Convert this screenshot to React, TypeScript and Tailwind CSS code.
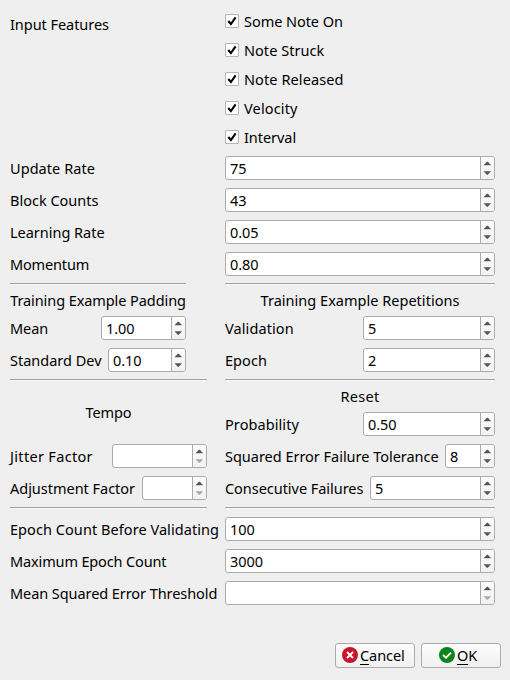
import React from 'react';

type LabelProps = { text: string; tracking?: string };

function Label({ text, tracking = '' }: LabelProps) {
  return <span className={`whitespace-pre ${tracking}`}>{text}</span>;
}

function CheckRow({ text, tracking }: LabelProps) {
  return (
    <label className="flex h-7 items-center gap-[5px]">
      <span className="flex size-[14px] shrink-0 items-center justify-center rounded-[1px] border border-[#b6b6b6] bg-white">
        <svg width="12" height="12" viewBox="0 0 12 12" fill="none" stroke="#000" strokeWidth="2.1">
          <path d="M2.3 6 L4.9 9.1 L9.6 2.4" />
        </svg>
      </span>
      <Label text={text} tracking={tracking} />
    </label>
  );
}

function SpinBox({ value = '', width = 'w-[270px]', atMinimum = false }: { value?: string; width?: string; atMinimum?: boolean }) {
  return (
    <span className={`flex h-6 shrink-0 rounded-[3px] border border-[#ababab] bg-white ${width}`}>
      <span className="flex flex-1 items-center pl-1 tracking-[-0.05px]">{value}</span>
      <span className="flex w-[14px] items-center justify-center rounded-r-[2px] border-l border-[#ababab] bg-linear-to-b from-[#fcfcfc] to-[#f1f1f1]">
        <svg width="13" height="22" viewBox="0 0 13 22">
          <path d="M2.5 8.3 L5.8 4.8 L6.8 4.8 L10.1 8.3 Z" fill="#555" />
          <path d="M2.5 14.2 L5.8 17.7 L6.8 17.7 L10.1 14.2 Z" fill={atMinimum ? '#a8a8a8' : '#555'} />
        </svg>
      </span>
    </span>
  );
}

function Field({ text, tracking, value, width, atMinimum }: LabelProps & { value?: string; width: string; atMinimum?: boolean }) {
  return (
    <div className="flex h-6 items-center justify-between">
      <Label text={text} tracking={tracking} />
      <SpinBox value={value} width={width} atMinimum={atMinimum} />
    </div>
  );
}

function WideField({ text, tracking, value, atMinimum }: LabelProps & { value?: string; atMinimum?: boolean }) {
  return (
    <div className="flex h-6 items-center">
      <div className="flex w-[215px] shrink-0">
        <Label text={text} tracking={tracking} />
      </div>
      <SpinBox value={value} atMinimum={atMinimum} />
    </div>
  );
}

function Separator() {
  return <div className="h-[2px] border-t border-b border-t-[#9f9f9f] border-b-[#f9f9f9]" />;
}

export default function App() {
  return (
    <div className="flex h-[680px] w-[510px] flex-col bg-[#efefef] pr-[15px] pl-[10px] font-['Noto_Sans',sans-serif] text-[14.5px] leading-5 text-black">
      <div className="flex pt-[7px]">
        <div className="w-[215px] pt-[7px]">
          <Label text="Input Features" tracking="tracking-[-0.05px]" />
        </div>
        <div className="flex flex-col gap-px">
          <CheckRow text="Some Note On" tracking="tracking-[-0.05px]" />
          <CheckRow text="Note Struck" tracking="tracking-[0.04px]" />
          <CheckRow text="Note Released" tracking="tracking-[0.1px]" />
          <CheckRow text="Velocity" tracking="tracking-[0.15px]" />
          <CheckRow text="Interval" tracking="tracking-[-0.05px]" />
        </div>
      </div>

      <div className="mt-[5px] flex flex-col gap-2">
        <WideField text="Update Rate" tracking="tracking-[0.06px]" value="75" />
        <WideField text="Block Counts" tracking="tracking-[0px]" value="43" />
        <WideField text="Learning Rate" tracking="tracking-[-0.02px]" value="0.05" />
        <WideField text="Momentum" tracking="tracking-[-0.15px]" value="0.80" />
      </div>

      <div className="mt-[7px] flex h-[89px]">
        <div className="mr-[39px] w-[176px]">
          <Separator />
          <div className="mt-[5px] text-center">
            <Label text="Training Example Padding" tracking="tracking-[-0.08px]" />
          </div>
          <div className="mt-[6px] flex flex-col gap-2">
            <Field text="Mean" tracking="tracking-[-0.1px]" value="1.00" width="w-[85px]" />
            <Field text="Standard Dev" tracking="tracking-[0px]" value="0.10" width="w-[78px]" />
          </div>
        </div>
        <div className="w-[270px]">
          <Separator />
          <div className="mt-[5px] text-center">
            <Label text="Training Example Repetitions" tracking="tracking-[0.02px]" />
          </div>
          <div className="mt-[6px] flex flex-col gap-2">
            <Field text="Validation" tracking="tracking-[0.1px]" value="5" width="w-[132px]" />
            <Field text="Epoch" tracking="tracking-[0.05px]" value="2" width="w-[132px]" />
          </div>
        </div>
      </div>

      <div className="mt-[7px] flex h-[128px]">
        <div className="mr-[18px] w-[197px]">
          <Separator />
          <div className="flex h-[63px] items-center justify-center pb-[2px]">
            <Label text="Tempo" tracking="tracking-[-0.1px]" />
          </div>
          <div className="flex flex-col gap-2">
            <Field text="Jitter Factor" tracking="tracking-[0.32px]" width="w-[95px]" atMinimum />
            <Field text="Adjustment Factor" tracking="tracking-[-0.02px]" width="w-[65px]" atMinimum />
          </div>
          <div className="mt-[7px]">
            <Separator />
          </div>
        </div>
        <div className="w-[270px]">
          <Separator />
          <div className="mt-[5px] text-center">
            <Label text="Reset" tracking="tracking-[0.3px]" />
          </div>
          <div className="mt-[6px] flex flex-col gap-2">
            <Field text="Probability" tracking="tracking-[0.08px]" value="0.50" width="w-[132px]" />
            <Field text="Squared Error Failure Tolerance" tracking="tracking-[-0.02px]" value="8" width="w-[50px]" />
            <Field text="Consecutive Failures" tracking="tracking-[-0.04px]" value="5" width="w-[125px]" />
          </div>
          <div className="mt-[7px]">
            <Separator />
          </div>
        </div>
      </div>

      <div className="mt-[10px] flex flex-col gap-2">
        <WideField text="Epoch Count Before Validating" tracking="tracking-[0.06px]" value="100" />
        <WideField text="Maximum Epoch Count" tracking="tracking-[-0.14px]" value="3000" />
        <WideField text="Mean Squared Error Threshold" tracking="tracking-[-0.07px]" atMinimum />
      </div>

      <div className="mt-[38px] -mr-[6px] flex justify-end gap-[6px]">
        <button className="flex h-[25px] w-[80px] items-center gap-[2px] rounded-[3px] border border-[#ababab] bg-linear-to-b from-[#fdfdfd] to-[#f0f0f0] pb-px pl-[6px]">
          <svg width="16" height="16" viewBox="0 0 16 16" className="shrink-0">
            <circle cx="8" cy="8" r="8" fill="#c7162b" />
            <path d="M5 5 L11 11 M11 5 L5 11" stroke="#fff" strokeWidth="1.8" />
          </svg>
          <span className="tracking-[-0.08px]"><span className="underline decoration-1 underline-offset-[3px]">C</span>ancel</span>
        </button>
        <button className="flex h-[25px] w-[80px] items-center gap-[2px] rounded-[3px] border border-[#ababab] bg-linear-to-b from-[#fdfdfd] to-[#f0f0f0] pb-px pl-[17px]">
          <svg width="16" height="16" viewBox="0 0 16 16" className="shrink-0">
            <circle cx="8" cy="8" r="8" fill="#0e8420" />
            <path d="M4 8 L7 10.7 L12 5.6" fill="none" stroke="#fff" strokeWidth="1.8" />
          </svg>
          <span className="tracking-[-0.2px]"><span className="underline decoration-1 underline-offset-[3px]">O</span>K</span>
        </button>
      </div>
    </div>
  );
}
